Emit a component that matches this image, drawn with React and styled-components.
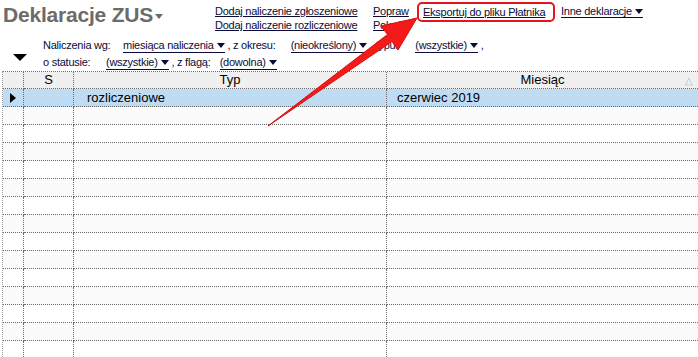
import React from "react";
import styled, { createGlobalStyle } from "styled-components";

const Global = createGlobalStyle`
  html, body { margin: 0; padding: 0; background: #fff; }
  body { font-family: "Liberation Sans", Arial, sans-serif; }
`;

const Page = styled.div`
  position: relative;
  width: 698px;
  height: 357px;
  overflow: hidden;
  background: #fff;
  color: #0b0b38;
`;

const Header = styled.div`
  display: flex;
  align-items: flex-start;
  height: 36px;
`;

const TitleArea = styled.div`
  width: 212px;
  padding: 2px 0 0 3px;
  display: flex;
  align-items: center;
  gap: 2px;
`;

const Title = styled.h1`
  margin: 0;
  font: bold 21px/26px "Liberation Sans", Arial, sans-serif;
  letter-spacing: -0.2px;
  color: #6b6b6b;
`;

const SmallCaret = styled.span`
  display: inline-block;
  width: 0;
  height: 0;
  border-left: 4px solid transparent;
  border-right: 4px solid transparent;
  border-top: 5px solid ${(p) => p.$color || "#0b0b38"};
  margin-left: ${(p) => p.$ml ?? 3}px;
  margin-top: ${(p) => p.$mt || 0}px;
  vertical-align: 1px;
`;

const LinkCol = styled.div`
  width: ${(p) => p.$w}px;
  margin-left: ${(p) => p.$ml || 0}px;
  display: flex;
  flex-direction: column;
  align-items: flex-start;
  padding-top: ${(p) => p.$pt ?? 4}px;
`;

const Link = styled.a`
  font-size: 11px;
  line-height: 14px;
  letter-spacing: -0.25px;
  color: #0b0b38;
  text-decoration: underline;
  white-space: nowrap;
  cursor: pointer;
`;

const MenuLink = styled.a`
  font-size: 11px;
  line-height: 12px;
  letter-spacing: -0.25px;
  color: #0b0b38;
  border-bottom: 1px solid #0b0b38;
  white-space: nowrap;
  cursor: pointer;
`;

const Highlight = styled.div`
  width: 138px;
  height: 20px;
  box-sizing: border-box;
  margin-top: 2px;
  border: 2px solid #e8141c;
  border-radius: 5px;
  padding: 0 0 0 4px;
  display: flex;
  align-items: center;
`;

const Filters = styled.div`
  display: flex;
  height: 35px;
`;

const BigCaretBox = styled.div`
  width: 43px;
  display: flex;
  align-items: flex-end;
  padding: 0 0 10px 13px;
  box-sizing: border-box;
`;

const BigCaret = styled.span`
  width: 0;
  height: 0;
  border-left: 7px solid transparent;
  border-right: 7px solid transparent;
  border-top: 7px solid #000;
`;

const FilterLines = styled.div`
  display: flex;
  flex-direction: column;
  padding-top: 1px;
`;

const FilterLine = styled.div`
  display: flex;
  align-items: baseline;
  height: 17px;
  font-size: 11px;
  line-height: 17px;
  letter-spacing: -0.25px;
  white-space: nowrap;
`;

const Label = styled.span`
  display: inline-block;
  width: ${(p) => p.$w}px;
`;

const Drop = styled.a`
  display: inline-block;
  line-height: 13px;
  color: #0b0b38;
  border-bottom: 1px solid #0b0b38;
  cursor: pointer;
`;

const Grid = styled.div`
  margin-left: 2px;
  display: grid;
  grid-template-columns: 21px 50px 313px 1fr;
  border-left: 1px dotted #9a9a9a;
  border-top: 1px dotted #6a6a6a;
  font-size: 13px;
  color: #000;
`;

const Cell = styled.div`
  height: ${(p) => (p.$head ? 16 : 17)}px;
  line-height: ${(p) => (p.$head ? 16 : 17)}px;
  border-right: 1px dotted #6a6a6a;
  border-bottom: 1px dotted #6a6a6a;
  background: ${(p) =>
    p.$head ? "#f0f0f0" : p.$sel ? "#bfdcf3" : p.$alt ? "#fbfbfb" : "#fff"};
  text-align: ${(p) => (p.$head ? "center" : "left")};
  padding-left: ${(p) => p.$pl || 0}px;
  white-space: nowrap;
  overflow: hidden;
  position: relative;
  &:nth-child(4n) {
    border-right: none;
  }
`;

const RowMark = styled.span`
  position: absolute;
  left: 7px;
  top: 4px;
  width: 0;
  height: 0;
  border-top: 5px solid transparent;
  border-bottom: 5px solid transparent;
  border-left: 6px solid #000;
`;

const SortMark = styled.span`
  position: absolute;
  right: 5px;
  top: 1px;
  font-size: 10px;
  color: #b8b8b8;
`;

const Arrow = styled.svg`
  position: absolute;
  left: 0;
  top: 0;
  pointer-events: none;
`;

const rows = Array.from({ length: 15 }, (_, i) => i);

export default function App() {
  return (
    <Page>
      <Global />
      <Header>
        <TitleArea>
          <Title>Deklaracje ZUS</Title>
          <SmallCaret $color="#6b6b6b" $ml={0} $mt={3} />
        </TitleArea>
        <LinkCol $w={158}>
          <Link>Dodaj naliczenie zgłoszeniowe</Link>
          <Link>Dodaj naliczenie rozliczeniowe</Link>
        </LinkCol>
        <LinkCol $w={44}>
          <Link>Popraw</Link>
          <Link>Pokaż</Link>
        </LinkCol>
        <Highlight>
          <Link>Eksportuj do pliku Płatnika</Link>
        </Highlight>
        <LinkCol $w={100} $ml={6} $pt={5}>
          <MenuLink>
            Inne deklaracje
            <SmallCaret />
          </MenuLink>
        </LinkCol>
      </Header>
      <Filters>
        <BigCaretBox>
          <BigCaret />
        </BigCaretBox>
        <FilterLines>
          <FilterLine>
            <Label $w={80}>Naliczenia wg:</Label>
            <Drop>
              miesiąca naliczenia
              <SmallCaret />
            </Drop>
            <Label $w={66}>&nbsp;, z okresu:</Label>
            <Drop>
              (nieokreślony)
              <SmallCaret />
            </Drop>
            <Label $w={48}>&nbsp;, typu:</Label>
            <Drop>
              (wszystkie)
              <SmallCaret />
            </Drop>
            <span>&nbsp;,</span>
          </FilterLine>
          <FilterLine>
            <Label $w={63}>o statusie:</Label>
            <Drop>
              (wszystkie)
              <SmallCaret />
            </Drop>
            <Label $w={51}>&nbsp;, z flagą:</Label>
            <Drop>
              (dowolna)
              <SmallCaret />
            </Drop>
          </FilterLine>
        </FilterLines>
      </Filters>
      <Grid>
        <Cell $head />
        <Cell $head>S</Cell>
        <Cell $head>Typ</Cell>
        <Cell $head>
          Miesiąc
          <SortMark>△</SortMark>
        </Cell>
        {rows.map((i) => {
          const sel = i === 0;
          const alt = i % 2 === 1;
          return (
            <React.Fragment key={i}>
              <Cell $sel={sel} $alt={alt}>
                {sel && <RowMark />}
              </Cell>
              <Cell $sel={sel} $alt={alt} />
              <Cell $sel={sel} $alt={alt} $pl={13}>
                {sel ? "rozliczeniowe" : ""}
              </Cell>
              <Cell $sel={sel} $alt={alt} $pl={10}>
                {sel ? "czerwiec 2019" : ""}
              </Cell>
            </React.Fragment>
          );
        })}
      </Grid>
      <Arrow width="698" height="357" viewBox="0 0 698 357">
        <polygon
          points="268,126 387.5,34.5 381,26 417,18 398,50 392,41.5"
          fill="#f41a1a"
          stroke="#d41010"
          strokeWidth="1"
          strokeLinejoin="round"
        />
      </Arrow>
    </Page>
  );
}
